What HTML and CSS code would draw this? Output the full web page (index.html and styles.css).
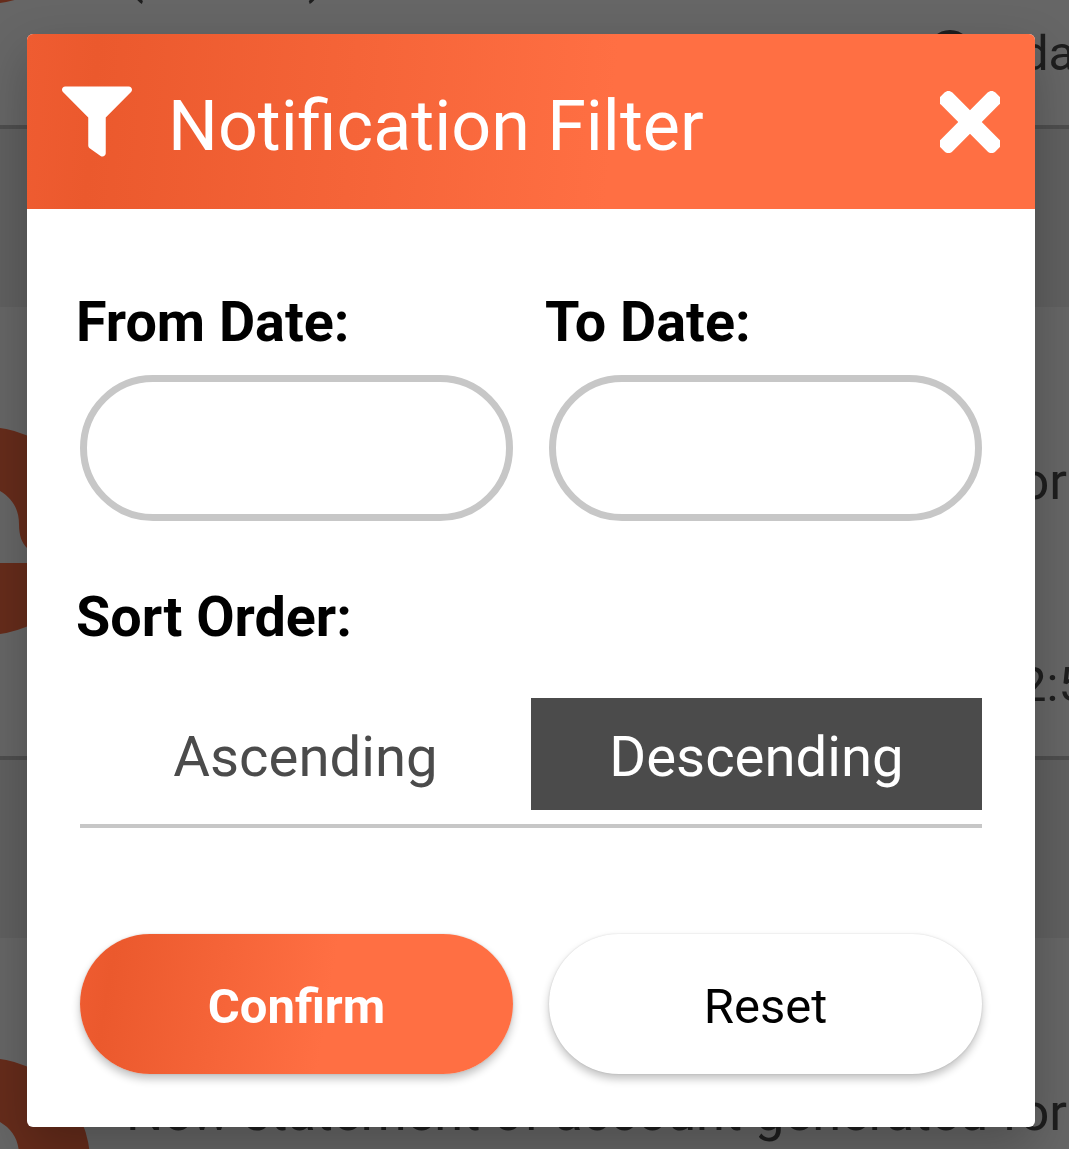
FILE: index.html
```html
<!DOCTYPE html>
<html lang="en">
<head>
<meta charset="utf-8">
<title>Notification Filter</title>
<link rel="stylesheet" href="styles.css">
</head>
<body>
<svg class="defs" width="0" height="0" aria-hidden="true">
  <symbol id="bell" viewBox="-104 -104 208 208">
    <circle r="104" fill="#ff6e44"/>
    <path d="M0-46C7-45 10-42 14-40C26-33 33-22 33-7C33 5 36 12 41 17L50 32H-50L-41 17C-36 12-33 5-33-7C-33-22-26-33-14-40C-10-42-7-45 0-46Z" fill="#fff"/>
  </symbol>
</svg>
<div class="screen">
  <main class="feed" aria-hidden="true">
    <article class="card">
      <svg class="badge"><use href="#bell"/></svg>
      <div class="content">
        <p class="message third"><span>(</span><span>)</span></p>
        <p class="time today"><svg class="clock" viewBox="0 0 44 44"><circle cx="22" cy="22" r="19" fill="none" stroke="#4b4b4b" stroke-width="6"/><path d="M22 11v12l8 5" fill="none" stroke="#4b4b4b" stroke-width="4"/></svg>Today</p>
      </div>
    </article>
    <article class="card">
      <svg class="badge"><use href="#bell"/></svg>
      <div class="content">
        <p class="message">New statement of account generated for</p>
        <p class="time">12:5</p>
      </div>
    </article>
    <article class="card">
      <svg class="badge"><use href="#bell"/></svg>
      <div class="content">
        <p class="message">New statement of account generated for</p>
      </div>
    </article>
  </main>
  <div class="overlay">
    <section class="dialog" role="dialog" aria-labelledby="title">
      <header class="dialog-header">
        <svg class="filter-icon" viewBox="0 0 512 512"><path fill="currentColor" d="M487.976 0H24.028C2.71 0-8.047 25.866 7.058 40.971L192 225.941V432c0 7.831 3.821 15.17 10.237 19.662l80 55.98C298.02 518.69 320 507.493 320 487.98V225.941l184.947-184.97C520.021 25.896 509.338 0 487.976 0z"/></svg>
        <h1 id="title">Notification Filter</h1>
        <svg class="close-icon" viewBox="6 80 340 352"><path fill="currentColor" d="M242.72 256l100.07-100.07c12.28-12.28 12.28-32.19 0-44.48l-22.24-22.24c-12.28-12.28-32.19-12.28-44.48 0L176 189.28 75.93 89.21c-12.28-12.28-32.19-12.28-44.48 0L9.21 111.45c-12.28 12.28-12.28 32.19 0 44.48L109.28 256 9.21 356.07c-12.28 12.28-12.28 32.19 0 44.48l22.24 22.24c12.28 12.28 32.2 12.28 44.48 0L176 322.72l100.07 100.07c12.28 12.28 32.2 12.28 44.48 0l22.24-22.24c12.28-12.28 12.28-32.19 0-44.48L242.72 256z"/></svg>
      </header>
      <div class="dialog-body">
        <div class="pair dates">
          <label class="field"><span class="label">From Date:</span><input class="date" type="text"></label>
          <label class="field"><span class="label">To Date:</span><input class="date" type="text"></label>
        </div>
        <div class="label sort-label">Sort Order:</div>
        <div class="segment">
          <button class="option">Ascending</button>
          <button class="option selected">Descending</button>
        </div>
        <div class="pair actions">
          <button class="btn primary">Confirm</button>
          <button class="btn">Reset</button>
        </div>
      </div>
    </section>
  </div>
</div>
</body>
</html>
```
FILE: styles.css
```css
* { box-sizing: border-box; }
body { margin: 0; font-family: Roboto, "Liberation Sans", sans-serif; }
h1, p { margin: 0; font-weight: 400; }
button, input { font: inherit; margin: 0; }
.defs { display: block; height: 0; }

.screen {
  display: grid;
  grid-template: 1149px / 1069px;
  width: 1069px;
  height: 1149px;
  overflow: hidden;
}
.feed, .overlay { grid-area: 1 / 1; }

/* Notification list behind the dialog */
.feed {
  display: flex;
  flex-direction: column;
  gap: 178px;
  height: 1715px;
  margin-top: -324px;
  background: #f0f0f0;
}
.card {
  display: flex;
  flex: none;
  height: 453px;
  overflow: hidden;
  background: #fff;
  border-bottom: 4px solid #c4c4c4;
  color: #4b4b4b;
}
.badge { flex: none; width: 208px; height: 208px; margin: 120px 0 0 -118px; }
.content {
  display: flex;
  flex: none;
  flex-direction: column;
  width: 979px;
  padding: 142px 0 0 36px;
}
.message { height: 204px; font-size: 52.3px; line-height: 64px; white-space: nowrap; }
.third { display: flex; justify-content: space-between; width: 200px; padding-top: 124px; }
.time {
  display: flex;
  align-items: center;
  justify-content: flex-end;
  height: 64px;
  margin-right: -17px;
  font-size: 49px;
  line-height: 66px;
}
.today { margin-right: -29px; }
.clock { width: 44px; height: 44px; margin: 0 -6px 5px 0; }

.overlay { z-index: 1; padding: 34px 34px 22px 27px; background: rgba(0, 0, 0, .6); }
.dialog {
  height: 1093px;
  overflow: hidden;
  border-radius: 6px;
  background: #fff;
  box-shadow: 0 20px 50px rgba(0, 0, 0, .24);
}
.dialog-header {
  display: flex;
  align-items: center;
  height: 175px;
  padding: 0 35px;
  color: #fff;
  background: linear-gradient(94.5deg, #ef5c31 0%, #eb592d 7%, #ff6f43 58%);
}
.filter-icon { flex: none; width: 70px; height: 71px; }
.dialog-header h1 { flex: 1; padding: 8px 0 0 36px; font-size: 70px; line-height: 82px; white-space: nowrap; }
.close-icon { flex: none; width: 60px; height: 62px; }

.dialog-body { padding: 80px 53px 0; }
.pair { display: grid; grid-template-columns: 1fr 1fr; gap: 36px; }
.field { display: flex; flex-direction: column; gap: 20px; }
.label { display: block; margin-left: -4px; font-size: 55.7px; font-weight: 700; line-height: 66px; white-space: nowrap; }
.date {
  width: 100%;
  height: 146px;
  padding: 0 50px;
  border: 7px solid #c7c7c7;
  border-radius: 73px;
  outline: 0;
  background: #fff;
}
.sort-label { margin-top: 63px; }
.segment { display: flex; margin-top: 48px; padding-bottom: 14px; border-bottom: 4px solid #c7c7c7; }
.option {
  flex: 1;
  height: 112px;
  padding: 6px 0 0;
  border: 0;
  background: none;
  color: #4b4b4b;
  font-size: 56.3px;
}
.selected { background: #4b4b4b; color: #fff; }
.actions { margin-top: 106px; }
.btn {
  height: 140px;
  padding: 4px 0 0;
  border: 0;
  border-radius: 70px;
  background: #fff;
  color: #000;
  font-size: 49px;
  box-shadow: 0 5px 9px rgba(0, 0, 0, .24), 0 0 2px rgba(0, 0, 0, .14);
}
.primary {
  background: linear-gradient(99deg, #ef5c31 0%, #eb592d 8%, #ff6f43 57%);
  color: #fff;
  font-weight: 700;
}
```
